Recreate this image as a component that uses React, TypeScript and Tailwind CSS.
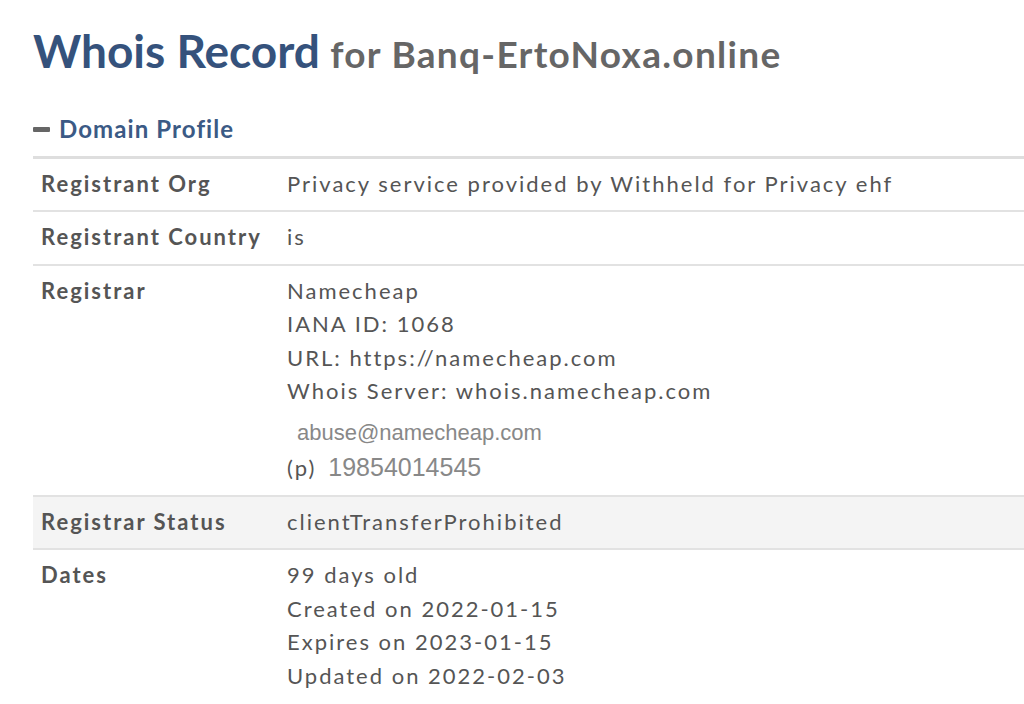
import React from 'react'

interface Row {
  label: string
  lines: React.ReactNode[]
  shaded?: boolean
  pad: string
}

const contactStyle = 'font-["Liberation_Sans",Arial,sans-serif] text-[#888] tracking-normal'

const ROWS: Row[] = [
  { label: 'Registrant Org', pad: 'pb-[9.5px]', lines: ['Privacy service provided by Withheld for Privacy ehf'] },
  { label: 'Registrant Country', pad: 'pb-[10px]', lines: ['is'] },
  {
    label: 'Registrar',
    pad: 'pb-[11px]',
    lines: [
      'Namecheap',
      'IANA ID: 1068',
      'URL: https://namecheap.com',
      'Whois Server: whois.namecheap.com',
      <div key="mail" className={`pl-[10px] pt-[7.5px] text-[22px] leading-[34px] ${contactStyle}`}>abuse@namecheap.com</div>,
      <div key="phone" className="flex items-baseline gap-[12px] pt-[1px]">
        <span>(p)</span>
        <span className={`text-[25px] ${contactStyle}`}>19854014545</span>
      </div>,
    ],
  },
  { label: 'Registrar Status', pad: 'pb-[9.5px]', lines: ['clientTransferProhibited'], shaded: true },
  {
    label: 'Dates',
    pad: 'pb-[16px]',
    lines: ['99 days old', 'Created on 2022-01-15', 'Expires on 2023-01-15', 'Updated on 2022-02-03'],
  },
]

export default function App() {
  return (
    <div className="min-h-[704px] bg-white font-['Lato',sans-serif] text-[#555] pl-[33px] pt-[21px]">
      <h1 className="font-bold leading-[60px] whitespace-nowrap">
        <span className="text-[46px] text-[#35527c]">Whois Record</span>
        <span className="text-[37px] text-[#666] tracking-[1.3px]"> for Banq-ErtoNoxa.online</span>
      </h1>

      <div className="mt-[19px] flex items-center gap-[9px] h-[36px]">
        <div className="w-[17px] h-[5px] bg-[#666] rounded-[1px]" />
        <span className="text-[24px] font-bold text-[#3b5a85] tracking-[1.1px]">Domain Profile</span>
      </div>

      <div className="mt-[9px] border-t-[3px] border-[#dedede]">
        {ROWS.map((row) => (
          <div
            key={row.label}
            className={`flex border-b-2 border-[#e2e2e2] text-[22px] leading-[33.6px] tracking-[2px] pt-[8px] ${row.pad} ${row.shaded ? 'bg-[#f4f4f4]' : ''}`}
          >
            <div className="w-[254px] shrink-0 pl-[8px] font-bold">{row.label}</div>
            <div className="whitespace-nowrap">
              {row.lines.map((line, i) => (
                <div key={i}>{line}</div>
              ))}
            </div>
          </div>
        ))}
      </div>
    </div>
  )
}
